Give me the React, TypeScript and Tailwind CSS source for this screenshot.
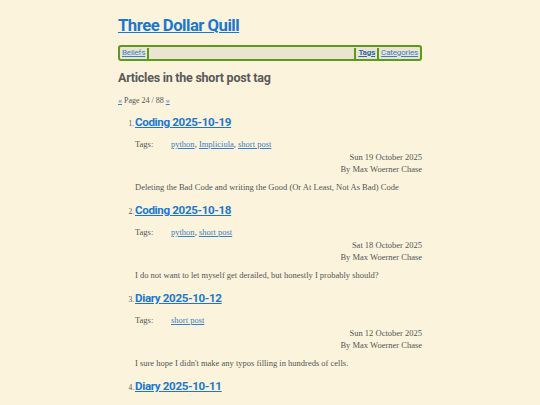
const heading = "font-['Roboto','Liberation_Sans',sans-serif]";
const body = "font-['Liberation_Serif','DejaVu_Serif',serif]";

interface Post {
    title: string;
    tags: string[];
    date: string;
    summary: string;
}

const posts: Post[] = [
    {
        title: "Coding 2025-10-19",
        tags: ["python", "Impliciula", "short post"],
        date: "Sun 19 October 2025",
        summary: "Deleting the Bad Code and writing the Good (Or At Least, Not As Bad) Code",
    },
    {
        title: "Coding 2025-10-18",
        tags: ["python", "short post"],
        date: "Sat 18 October 2025",
        summary: "I do not want to let myself get derailed, but honestly I probably should?",
    },
    {
        title: "Diary 2025-10-12",
        tags: ["short post"],
        date: "Sun 12 October 2025",
        summary: "I sure hope I didn't make any typos filling in hundreds of cells.",
    },
];

function Separator() {
    return <span className="mx-[2px] inline-block h-[11px] w-[2px] bg-[#5c9a1e]" />;
}

function Title({ n, text }: { n: number; text: string }) {
    return (
        <div className="flex items-baseline">
            <span className="-ml-[9px] mr-[1px] w-[8px] text-right text-[7.5px]">{n}.</span>
            <a href="#" className={`${heading} text-[11.6px] font-bold leading-[16px] tracking-[-0.03em] text-[#1a78d2] underline`}>
                {text}
            </a>
        </div>
    );
}

export default function App() {
    return (
        <div className={`min-h-[405px] overflow-hidden bg-[#fbf3dc] text-[#555] ${body}`}>
            <div className="mx-auto w-[304px] pt-[14px]">
                <h1 className={`${heading} text-[16.7px] font-bold leading-[24px] tracking-[-0.03em]`}>
                    <a href="#" className="text-[#1a78d2] underline">Three Dollar Quill</a>
                </h1>

                <nav className={`${heading} mt-[7px] flex h-[16px] items-center rounded-[3px] border-2 border-[#5c9a1e] bg-[#ebe4d1] px-[2px] text-[8px] tracking-[-0.02em]`}>
                    <a href="#" className="text-[#3a7fc4] underline">Beliefs</a>
                    <Separator />
                    <div className="flex-1" />
                    <Separator />
                    <a href="#" className="font-bold text-[#2a6aa8] underline">Tags</a>
                    <Separator />
                    <a href="#" className="text-[#3a7fc4] underline">Categories</a>
                </nav>

                <h2 className={`${heading} mt-[8px] text-[12.5px] font-bold leading-[18px] tracking-[-0.02em] text-[#5a5a5a]`}>
                    Articles in the short post tag
                </h2>

                <p className="mt-[9px] text-[8px] leading-[10px]">
                    <a href="#" className="text-[#3a7fc4] underline">«</a> Page 24 / 88{" "}
                    <a href="#" className="text-[#3a7fc4] underline">»</a>
                </p>

                <ol className="mt-[8px] pl-[17px]">
                    {posts.map((post, i) => (
                        <li key={post.title} className="mb-[10px]">
                            <Title n={i + 1} text={post.title} />
                            <div className="mt-[9px] flex text-[8.5px] leading-[10px]">
                                <span className="w-[36px]">Tags:</span>
                                <span>
                                    {post.tags.map((tag, j) => (
                                        <span key={tag}>
                                            <a href="#" className="text-[#3a7fc4] underline">{tag}</a>
                                            {j < post.tags.length - 1 ? ", " : ""}
                                        </span>
                                    ))}
                                </span>
                            </div>
                            <div className="mt-[2px] text-right text-[8.5px] leading-[12px]">
                                <div>{post.date}</div>
                                <div>By Max Woerner Chase</div>
                            </div>
                            <p className="mt-[7px] whitespace-nowrap text-[8.5px] leading-[10px]">{post.summary}</p>
                        </li>
                    ))}
                    <li className="mt-[3px]">
                        <Title n={4} text="Diary 2025-10-11" />
                    </li>
                </ol>
            </div>
        </div>
    );
}
